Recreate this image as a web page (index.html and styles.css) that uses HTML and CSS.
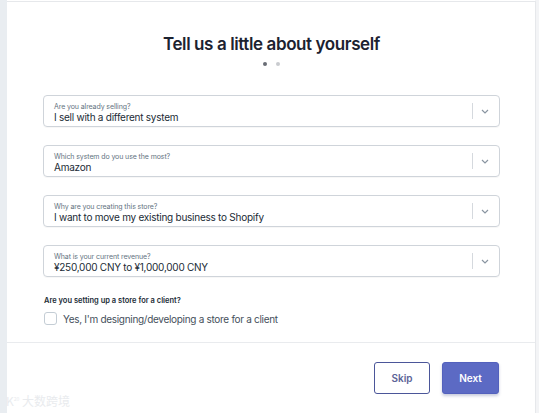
FILE: index.html
```html
<!DOCTYPE html>
<html>
<head>
<meta charset="utf-8">
<link rel="stylesheet" href="styles.css">
</head>
<body>
<div class="page">
  <div class="card">
    <div class="main">
      <h1 class="title">Tell us a little about yourself</h1>
      <div class="dots"><span class="dot on"></span><span class="dot"></span></div>
      <div class="fields">
        <div class="select">
          <div class="sel-text"><div class="sel-label">Are you already selling?</div><div class="sel-value">I sell with a different system</div></div>
          <div class="sel-sep"></div>
          <svg class="chev" width="8" height="5" viewBox="0 0 8 5"><path d="M1 1l3 3 3-3" fill="none" stroke="#8a95a1" stroke-width="1.2"/></svg>
        </div>
        <div class="select">
          <div class="sel-text"><div class="sel-label">Which system do you use the most?</div><div class="sel-value">Amazon</div></div>
          <div class="sel-sep"></div>
          <svg class="chev" width="8" height="5" viewBox="0 0 8 5"><path d="M1 1l3 3 3-3" fill="none" stroke="#8a95a1" stroke-width="1.2"/></svg>
        </div>
        <div class="select">
          <div class="sel-text"><div class="sel-label">Why are you creating this store?</div><div class="sel-value">I want to move my existing business to Shopify</div></div>
          <div class="sel-sep"></div>
          <svg class="chev" width="8" height="5" viewBox="0 0 8 5"><path d="M1 1l3 3 3-3" fill="none" stroke="#8a95a1" stroke-width="1.2"/></svg>
        </div>
        <div class="select">
          <div class="sel-text"><div class="sel-label">What is your current revenue?</div><div class="sel-value">¥250,000 CNY to ¥1,000,000 CNY</div></div>
          <div class="sel-sep"></div>
          <svg class="chev" width="8" height="5" viewBox="0 0 8 5"><path d="M1 1l3 3 3-3" fill="none" stroke="#8a95a1" stroke-width="1.2"/></svg>
        </div>
      </div>
      <div class="client">
        <div class="client-q">Are you setting up a store for a client?</div>
        <label class="check"><span class="box"></span><span class="check-text">Yes, I'm designing/developing a store for a client</span></label>
      </div>
    </div>
    <div class="footer">
      <button class="btn skip">Skip</button>
      <button class="btn next">Next</button>
    </div>
  </div>
  <div class="watermark">K<sup>20</sup> 大数跨境</div>
</div>
</body>
</html>
```
FILE: styles.css
```css
* { box-sizing: border-box; }
html, body { margin: 0; padding: 0; }
body {
  width: 539px;
  height: 413px;
  overflow: hidden;
  background: #fff;
  font-family: "Inter", "Liberation Sans", sans-serif;
}
.page {
  position: relative;
  height: 413px;
  display: flex;
  background: linear-gradient(to right, #e9edf1 0 7px, #fff 7px 535px, #f3f4f6 535px);
  padding: 1px 0 0 7px;
}
.card {
  width: 529px;
  background: #fff;
  border-top: 1px solid #e6e8eb;
  border-right: 1px solid #e6e8eb;
  display: flex;
  flex-direction: column;
}
.main {
  height: 341px;
  border-bottom: 1px solid #e9ebee;
  padding: 0 35px 0 36px;
  display: flex;
  flex-direction: column;
}
.title {
  margin: 30px 0 0;
  text-align: center;
  font-size: 17px;
  font-weight: 600;
  color: #1c2230;
  letter-spacing: -0.4px;
  line-height: 24px;
}
.dots {
  display: flex;
  justify-content: center;
  gap: 9px;
  margin-top: 6px;
}
.dot { width: 4px; height: 4px; border-radius: 50%; background: #c9cbcf; }
.dot.on { background: #696d75; }
.fields {
  margin-top: 29px;
  display: flex;
  flex-direction: column;
  gap: 18px;
}
.select {
  height: 32px;
  border: 1px solid #cfd4da;
  border-radius: 4px;
  display: flex;
  align-items: center;
  padding: 0 10px 0 10px;
  box-shadow: 0 1px 0 rgba(0,0,0,0.03);
}
.sel-text { flex: 1; padding-top: 3px; }
.sel-label { font-size: 7px; line-height: 9px; color: #637381; letter-spacing: -0.1px; }
.sel-value { font-size: 10px; line-height: 13px; color: #212b36; letter-spacing: -0.25px; }
.sel-sep { width: 1px; height: 16px; background: #d5d9de; margin-right: 8px; }
.chev { display: block; }
.client { margin-top: 19px; }
.client-q { font-size: 7.5px; font-weight: 600; color: #212b36; line-height: 10px; padding-left: 1px; }
.check { display: flex; align-items: center; margin-top: 6px; padding-left: 1px; }
.box {
  width: 13px; height: 13px;
  border: 1px solid #c4cdd5;
  border-radius: 3px;
  background: #fff;
  margin-right: 6px;
}
.check-text { font-size: 10px; color: #454f5b; letter-spacing: -0.3px; }
.footer {
  flex: 1;
  display: flex;
  justify-content: flex-end;
  align-items: flex-start;
  padding: 19px 36px 0 0;
  gap: 12px;
}
.btn {
  height: 32px;
  border-radius: 3px;
  font-family: "Inter", "Liberation Sans", sans-serif;
  font-size: 10px;
  font-weight: 600;
  cursor: pointer;
}
.skip {
  width: 56px;
  background: #fff;
  border: 1px solid #4b5699;
  color: #5c6496;
}
.next {
  width: 57px;
  background: #5c6ac4;
  border: 1px solid #5361bd;
  color: #fff;
  box-shadow: 0 2px 3px rgba(40,50,120,0.25);
}
.watermark {
  position: absolute;
  left: 6px;
  bottom: 4px;
  font-family: "Noto Sans CJK SC", sans-serif;
  font-size: 12px;
  color: #e9ebee;
}
.watermark sup { font-size: 5px; }
```
